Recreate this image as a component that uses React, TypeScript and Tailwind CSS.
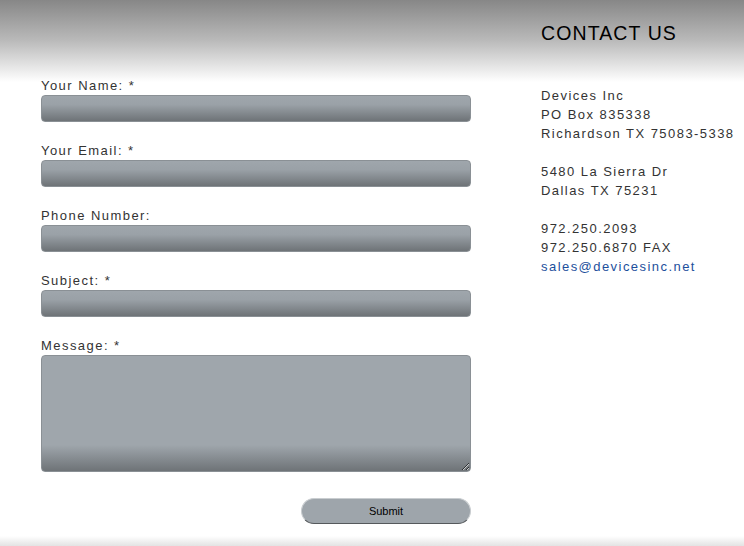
import React from "react";

const fields = [
  { label: "Your Name: *" },
  { label: "Your Email: *" },
  { label: "Phone Number:" },
  { label: "Subject: *" },
];

export default function App() {
  return (
    <div
      className="relative flex h-[546px] w-[744px] flex-col overflow-hidden bg-[linear-gradient(to_bottom,#878787_0px,#b9b9b9_40px,#ffffff_82px,#ffffff_100%)] text-[#333] tracking-[1.45px]"
      style={{ fontFamily: '"Liberation Sans", Arial, sans-serif' }}
    >
      <div className="flex flex-1">
        {/* form */}
        <form className="ml-[41px] flex w-[430px] flex-col pt-[78px]">
          {fields.map((f) => (
            <div key={f.label} className="mb-[21px] flex flex-col">
              <label className="h-[17px] text-[13px] leading-[15px] text-[#333]">{f.label}</label>
              <input
                type="text"
                className="h-[27px] w-full rounded-[4px] border border-[#8a9095] bg-[linear-gradient(to_bottom,#9fa6ac_0%,#9aa1a7_35%,#6e7377_100%)] outline-none"
              />
            </div>
          ))}
          <div className="flex flex-col">
            <label className="h-[17px] text-[13px] leading-[15px] text-[#333]">Message: *</label>
            <textarea className="h-[117px] w-full resize-y rounded-[4px] border border-[#8a9095] bg-[linear-gradient(to_bottom,#9fa6ac_0%,#9fa6ac_calc(100%-26px),#6e7377_100%)] outline-none" />
          </div>
          <div className="mt-[26px] flex justify-end">
            <button
              type="button"
              className="h-[26px] w-[170px] rounded-[13px] border border-[#c9cdd0] border-b-[#55595c] bg-[#9ea5ab] text-[11px] tracking-normal text-black"
            >
              Submit
            </button>
          </div>
        </form>

        {/* contact */}
        <div className="ml-[70px] flex flex-col pt-[21px]">
          <h2 className="text-[19.5px] leading-[24px] tracking-[1.1px] text-black">CONTACT US</h2>
          <div className="mt-[41px] text-[13px] leading-[19px] text-[#333]">
            <p>Devices Inc</p>
            <p>PO Box 835338</p>
            <p>Richardson TX 75083-5338</p>
            <p className="mt-[19px]">5480 La Sierra Dr</p>
            <p>Dallas TX 75231</p>
            <p className="mt-[19px]">972.250.2093</p>
            <p>972.250.6870 FAX</p>
            <a href="#" className="text-[#1d4f9c]">sales@devicesinc.net</a>
          </div>
        </div>
      </div>
      <div className="h-[10px] bg-[linear-gradient(to_bottom,#ffffff,#e3e3e3)]" />
    </div>
  );
}
